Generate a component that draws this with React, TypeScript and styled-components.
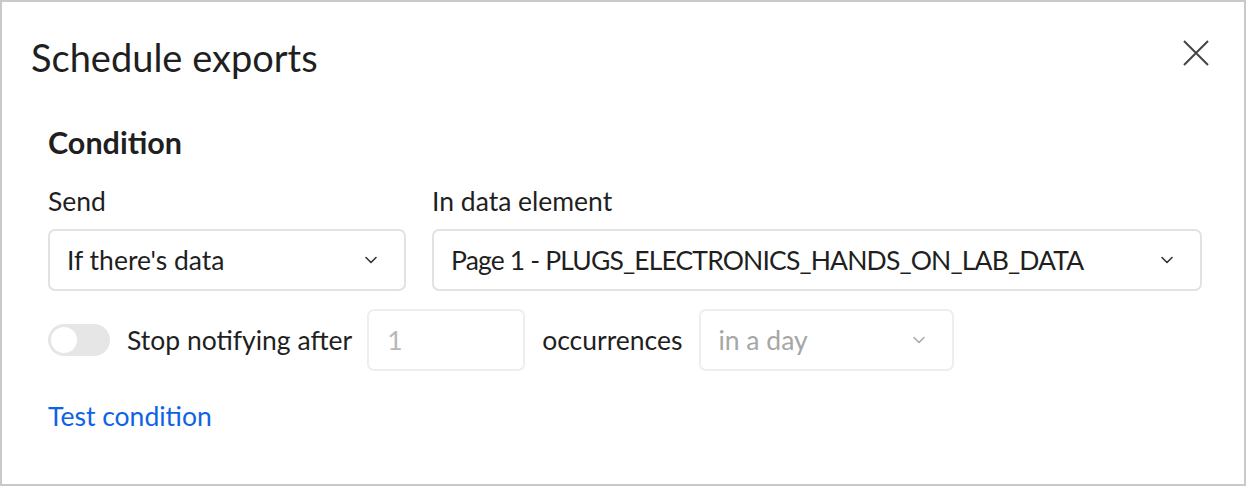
import styled, { createGlobalStyle } from 'styled-components';

const GlobalStyle = createGlobalStyle`
  html, body {
    margin: 0;
    padding: 0;
    background: #ffffff;
  }
  body {
    font-family: Lato, 'Liberation Sans', sans-serif;
    color: #1f1f1f;
  }
`;

const Dialog = styled.div`
  box-sizing: border-box;
  width: 1246px;
  height: 486px;
  border: 2px solid #c9c9c9;
  background: #fff;
  padding: 29px 30px 0 29px;
`;

const Header = styled.header`
  display: flex;
  justify-content: space-between;
  align-items: center;
  height: 52px;
`;

const Title = styled.h1`
  margin: 0;
  font-size: 38px;
  font-weight: 400;
  line-height: 52px;
  color: #1f1f1f;
`;

const CloseButton = styled.button`
  display: flex;
  align-items: center;
  justify-content: center;
  width: 40px;
  height: 40px;
  margin: -8px -2px 0 0;
  padding: 0;
  border: none;
  background: none;
  cursor: pointer;
  color: #444;
`;

const Section = styled.section`
  display: flex;
  flex-direction: column;
  padding-left: 17px;
  margin-top: 41px;
`;

const SectionTitle = styled.h2`
  margin: 0;
  font-size: 30.5px;
  font-weight: 700;
  line-height: 36px;
`;

const FieldGrid = styled.div`
  display: grid;
  grid-template-columns: 358px 770px;
  column-gap: 26px;
  margin-top: 25px;
`;

const Field = styled.div`
  display: flex;
  flex-direction: column;
  gap: 12px;
`;

const Label = styled.label`
  font-size: 26.5px;
  line-height: 32px;
`;

const SelectBox = styled.div<{ $disabled?: boolean; $width?: number; $tight?: boolean }>`
  box-sizing: border-box;
  display: flex;
  align-items: center;
  justify-content: space-between;
  height: 62px;
  width: ${(p) => (p.$width ? `${p.$width}px` : 'auto')};
  padding: 0 26px 0 17px;
  border: 2px solid ${(p) => (p.$disabled ? '#eeeeee' : '#e2e2e2')};
  border-radius: 7px;
  font-size: 26.5px;
  letter-spacing: ${(p) => (p.$tight ? '-0.85px' : 'normal')};
  color: ${(p) => (p.$disabled ? '#a6a6a6' : '#1f1f1f')};
  white-space: nowrap;
`;

const Chevron = ({ color }: { color: string }) => (
  <svg width="14" height="8" viewBox="0 0 14 8" fill="none">
    <path d="M2 1.5L7 6.5L12 1.5" stroke={color} strokeWidth="1.6" strokeLinecap="round" strokeLinejoin="round" />
  </svg>
);

const LimitRow = styled.div`
  display: flex;
  align-items: center;
  gap: 17px;
  margin-top: 18px;
  font-size: 26.5px;
`;

const Toggle = styled.span`
  position: relative;
  display: inline-block;
  width: 62px;
  height: 32px;
  border-radius: 16px;
  background: #e6e6e6;

  &::after {
    content: '';
    position: absolute;
    left: 3px;
    top: 3px;
    width: 26px;
    height: 26px;
    border-radius: 50%;
    background: #fff;
  }
`;

const NumberInput = styled.div`
  box-sizing: border-box;
  display: flex;
  align-items: center;
  width: 158px;
  height: 62px;
  margin-left: -2px;
  padding-left: 18px;
  border: 2px solid #eeeeee;
  border-radius: 7px;
  color: #b8b8b8;
`;

const Link = styled.a`
  margin-top: 29px;
  font-size: 26.5px;
  line-height: 32px;
  color: #0d63e6;
  text-decoration: none;
  align-self: flex-start;
`;

export default function App() {
  return (
    <>
      <GlobalStyle />
      <Dialog>
        <Header>
          <Title>Schedule exports</Title>
          <CloseButton aria-label="Close">
            <svg width="26" height="26" viewBox="0 0 26 26">
              <path d="M1 1L25 25M25 1L1 25" stroke="currentColor" strokeWidth="2" />
            </svg>
          </CloseButton>
        </Header>
        <Section>
          <SectionTitle>Condition</SectionTitle>
          <FieldGrid>
            <Field>
              <Label>Send</Label>
              <SelectBox>
                If there's data
                <Chevron color="#333" />
              </SelectBox>
            </Field>
            <Field>
              <Label>In data element</Label>
              <SelectBox $tight>
                Page 1 - PLUGS_ELECTRONICS_HANDS_ON_LAB_DATA
                <Chevron color="#333" />
              </SelectBox>
            </Field>
          </FieldGrid>
          <LimitRow>
            <Toggle />
            <span>Stop notifying after</span>
            <NumberInput>1</NumberInput>
            <span>occurrences</span>
            <SelectBox $disabled $width={255}>
              in a day
              <Chevron color="#aaa" />
            </SelectBox>
          </LimitRow>
          <Link href="#">Test condition</Link>
        </Section>
      </Dialog>
    </>
  );
}
